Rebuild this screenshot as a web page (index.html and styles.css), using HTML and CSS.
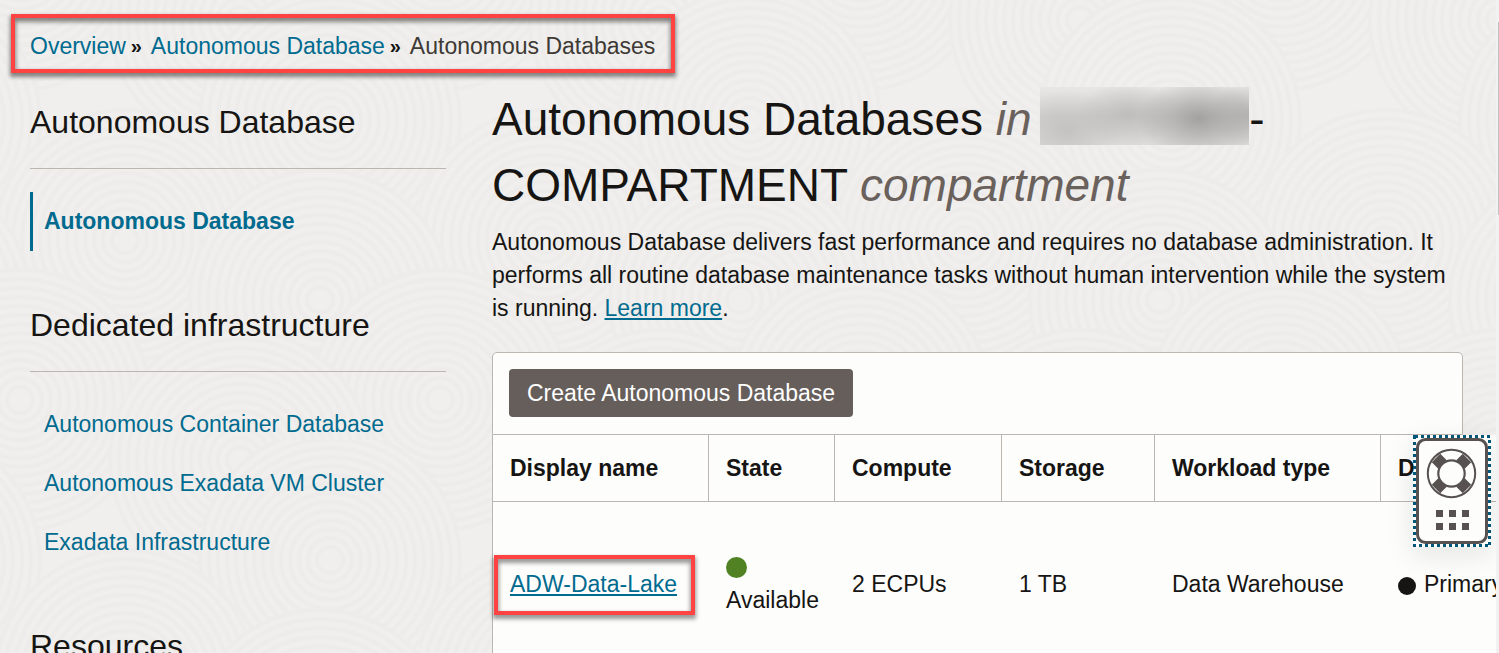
FILE: index.html
```html
<!DOCTYPE html>
<html lang="en">
<head>
<meta charset="utf-8">
<meta name="viewport" content="width=device-width, initial-scale=1">
<title>Autonomous Databases</title>
<link rel="stylesheet" href="styles.css">
</head>
<body>
<div class="page">
  <svg class="texture" aria-hidden="true">
    <defs>
      <g id="rings">
        <circle class="disc" r="132"/>
        <circle class="ring" r="130"/><circle class="ring" r="121"/><circle class="ring" r="112"/><circle class="ring" r="103"/>
        <circle class="ring" r="94"/><circle class="ring" r="85"/><circle class="ring" r="76"/><circle class="ring" r="67"/>
        <circle class="ring" r="58"/><circle class="ring" r="49"/><circle class="ring" r="40"/><circle class="ring" r="31"/>
        <circle class="ring" r="22"/><circle class="ring" r="13"/>
      </g>
      <pattern id="waves" width="420" height="440" patternUnits="userSpaceOnUse">
        <use href="#rings" x="20" y="-40"/><use href="#rings" x="440" y="-40"/>
        <use href="#rings" x="240" y="20"/>
        <use href="#rings" x="-90" y="120"/><use href="#rings" x="330" y="120"/>
        <use href="#rings" x="125" y="240"/>
        <use href="#rings" x="-100" y="300"/><use href="#rings" x="320" y="300"/>
        <use href="#rings" x="20" y="400"/><use href="#rings" x="440" y="400"/>
        <use href="#rings" x="240" y="460"/>
      </pattern>
    </defs>
    <rect width="100%" height="100%" fill="url(#waves)"/>
  </svg>

  <nav class="breadcrumb" aria-label="Breadcrumb">
    <a href="#">Overview</a>
    <span class="separator">»</span>
    <a href="#">Autonomous Database</a>
    <span class="separator">»</span>
    <span class="current">Autonomous Databases</span>
  </nav>

  <div class="columns">
    <aside class="sidebar">
      <section class="group">
        <h2>Autonomous Database</h2>
        <ul>
          <li class="active"><a href="#">Autonomous Database</a></li>
        </ul>
      </section>
      <section class="group">
        <h2>Dedicated infrastructure</h2>
        <ul>
          <li><a href="#">Autonomous Container Database</a></li>
          <li><a href="#">Autonomous Exadata VM Cluster</a></li>
          <li><a href="#">Exadata Infrastructure</a></li>
        </ul>
      </section>
      <section class="group">
        <h2>Resources</h2>
      </section>
    </aside>

    <main class="content">
      <h1>Autonomous Databases <em>in</em> <span class="redacted"></span>-<wbr>COMPARTMENT <em>compartment</em></h1>
      <p class="intro">Autonomous Database delivers fast performance and requires no database administration. It performs all routine database maintenance tasks without human intervention while the system is running. <a href="#">Learn more</a>.</p>

      <div class="toolbar">
        <button type="button" class="create">Create Autonomous Database</button>
      </div>
      <table class="databases">
        <thead>
          <tr>
            <th scope="col" class="col-name">Display name</th>
            <th scope="col" class="col-state">State</th>
            <th scope="col" class="col-compute">Compute</th>
            <th scope="col" class="col-storage">Storage</th>
            <th scope="col" class="col-workload">Workload type</th>
            <th scope="col" class="col-guard">D</th>
          </tr>
        </thead>
        <tbody>
          <tr>
            <td><a class="marked" href="#">ADW-Data-Lake</a></td>
            <td><span class="status"><i class="dot available"></i></span>Available</td>
            <td>2 ECPUs</td>
            <td>1 TB</td>
            <td>Data Warehouse</td>
            <td><span class="role"><i class="dot primary"></i>Primary</span></td>
          </tr>
        </tbody>
      </table>
    </main>
  </div>

  <button type="button" class="help" aria-label="Help">
    <svg width="78" height="112" viewBox="0 0 78 112" fill="none" aria-hidden="true">
      <rect x="1.5" y="1.5" width="75" height="109" stroke="#00567a" stroke-width="3" stroke-dasharray="3 3" shape-rendering="crispEdges"/>
      <rect x="4.5" y="4.5" width="69" height="103" rx="8" fill="#fdfdfc" stroke="#57524f" stroke-width="3"/>
      <g stroke="#57524f">
        <path stroke-width="12" d="M29.500 29.500 23 23M47.500 29.500 54 23M29.500 47.500 23 54M47.500 47.500 54 54"/>
        <circle cx="38.500" cy="38.500" r="23.700" stroke-width="2"/>
        <circle cx="38.500" cy="38.500" r="13.200" stroke-width="2.200" fill="#fdfdfc"/>
      </g>
      <path fill="#57524f" d="M23 75h7v7h-7zM36 75h7v7h-7zM49 75h7v7h-7zM23 88h7v7h-7zM36 88h7v7h-7zM49 88h7v7h-7z"/>
    </svg>
  </button>
</div>
<div class="scroll-track" aria-hidden="true"><div class="scroll-thumb"></div></div>
</body>
</html>
```
FILE: styles.css
```css
* {
  box-sizing: border-box;
}

body {
  margin: 0;
  height: 100vh;
  display: flex;
  overflow: hidden;
  background: #f1efed;
  color: #161513;
  font: 23px/33px "Liberation Sans", Arial, sans-serif;
}

a {
  color: #006b8f;
  text-decoration: none;
}

.page {
  position: relative;
  flex: 1;
  min-width: 0;
  overflow: hidden;
  padding-top: 14px;
}

.texture {
  position: absolute;
  inset: 0;
  width: 100%;
  height: 100%;
  z-index: -1;
}

.disc {
  fill: #f0efed;
}

.ring {
  fill: none;
  stroke: #edecea;
  stroke-width: 4;
}

.breadcrumb {
  display: flex;
  width: fit-content;
  margin-left: 11px;
  padding: 12px 16px 6px 15px;
  border: 4px solid #ff4343;
  box-shadow: 0 3px 4px 1px rgba(0, 0, 0, 0.45), inset 0 3px 4px 1px rgba(0, 0, 0, 0.45);
}

.separator {
  width: 25px;
  padding-left: 5px;
  font-size: 20px;
  font-weight: 700;
}

.current {
  color: #3d3935;
}

.columns {
  display: grid;
  grid-template-columns: 416px minmax(0, 1fr);
  column-gap: 46px;
  padding: 13px 33px 0 30px;
}

.sidebar {
  padding-top: 14px;
}

.group + .group {
  margin-top: 52px;
}

h2 {
  margin: 0 0 23px;
  padding-bottom: 24px;
  border-bottom: 1px solid #bcb6b1;
  font-size: 32px;
  line-height: 44px;
  font-weight: 400;
}

.group ul {
  margin: 0;
  padding: 0;
  list-style: none;
}

.group li {
  padding: 13px 0 13px 11px;
  border-left: 3px solid transparent;
}

.group li.active {
  border-left-color: #006b8f;
  font-weight: 700;
}

h1 {
  margin: 0 0 8px;
  font-size: 46px;
  line-height: 66px;
  font-weight: 400;
}

h1 em {
  color: #6a615c;
}

.redacted {
  display: inline-block;
  width: 209px;
  height: 58px;
  margin-left: -4px;
  vertical-align: -10px;
  background:
    radial-gradient(ellipse 62px 40px at 76% 54%, rgba(150, 149, 147, 0.8), rgba(150, 149, 147, 0.35) 55%, rgba(150, 149, 147, 0)),
    radial-gradient(ellipse 52px 32px at 42% 46%, rgba(175, 174, 172, 0.6), rgba(175, 174, 172, 0)),
    radial-gradient(ellipse 56px 40px at 13% 75%, rgba(175, 174, 172, 0.5), rgba(175, 174, 172, 0)),
    radial-gradient(ellipse 40px 34px at 100% 48%, rgba(165, 164, 162, 0.6), rgba(165, 164, 162, 0)),
    linear-gradient(#e8e7e6, #d4d3d1 50%, #dcdbda);
}

.intro {
  margin: 0 0 27px;
}

.intro a {
  text-decoration: underline;
}

.toolbar {
  padding: 16px 16px 17px;
  border: 1px solid #bcb6b1;
  border-radius: 5px 5px 0 0;
  background: #fdfdfc;
}

.create {
  display: block;
  padding: 8px 18px 7px;
  border: 0;
  border-radius: 4px;
  background: #665e5b;
  color: #fff;
  font: inherit;
}

.databases {
  width: 1140px;
  table-layout: fixed;
  border-collapse: separate;
  border-spacing: 0;
  border-left: 1px solid #bcb6b1;
  background: #fdfdfc;
}

.databases th,
.databases td {
  padding: 16px 17px;
  text-align: left;
}

.databases th {
  height: 67px;
  border-right: 1px solid #bcb6b1;
  border-bottom: 1px solid #bcb6b1;
}

.databases td {
  height: 164px;
  white-space: nowrap;
}

.col-name { width: 216px; }
.col-state { width: 126px; }
.col-compute { width: 167px; }
.col-storage { width: 153px; }
.col-workload { width: 226px; }

.marked {
  position: relative;
  display: inline-block;
  text-decoration: underline;
}

.marked::after {
  content: "";
  position: absolute;
  inset: -13px -18px -14px -16px;
  border: 4px solid #ff4343;
  box-shadow: 0 3px 4px 1px rgba(0, 0, 0, 0.4), inset 0 3px 4px 1px rgba(0, 0, 0, 0.4);
}

.status {
  display: flex;
  align-items: center;
  height: 33px;
}

.role {
  display: flex;
  align-items: center;
  gap: 8px;
}

.dot {
  border-radius: 50%;
}

.available {
  width: 21px;
  height: 21px;
  background: #508223;
}

.primary {
  width: 18px;
  height: 18px;
  margin-top: 3px;
  background: #161513;
}

.help {
  position: absolute;
  top: 435px;
  right: 5px;
  padding: 0;
  border: 0;
  background: none;
  box-shadow: 0 8px 28px rgba(22, 21, 19, 0.1);
}

.help svg {
  display: block;
}

.scroll-track {
  width: 3px;
  padding: 22px 0 0 2px;
  background: #f1f1f1;
}

.scroll-thumb {
  height: 193px;
  background: #c1c1c1;
}
```
